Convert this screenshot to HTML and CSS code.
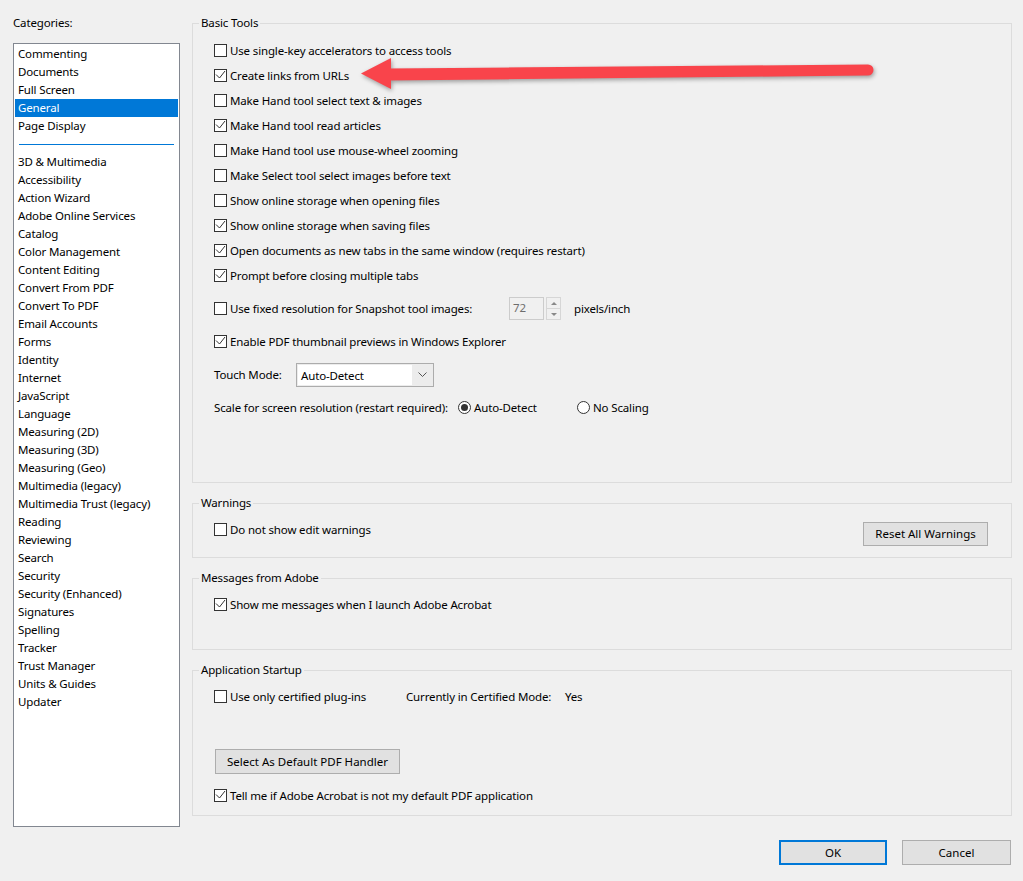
FILE: index.html
```html
<!doctype html>
<html lang="en">
<head>
<meta charset="utf-8">
<title>Preferences</title>
<link rel="stylesheet" href="styles.css">
</head>
<body>
<div class="dialog">
  <!-- category list on the left -->
  <div class="categories">
    <div class="cat-label">Categories:</div>
    <ul class="cat-list">
      <li>Commenting</li>
      <li>Documents</li>
      <li>Full Screen</li>
      <li class="selected">General</li>
      <li>Page Display</li>
      <li class="sep"></li>
      <li>3D &amp; Multimedia</li>
      <li>Accessibility</li>
      <li>Action Wizard</li>
      <li>Adobe Online Services</li>
      <li>Catalog</li>
      <li>Color Management</li>
      <li>Content Editing</li>
      <li>Convert From PDF</li>
      <li>Convert To PDF</li>
      <li>Email Accounts</li>
      <li>Forms</li>
      <li>Identity</li>
      <li>Internet</li>
      <li>JavaScript</li>
      <li>Language</li>
      <li>Measuring (2D)</li>
      <li>Measuring (3D)</li>
      <li>Measuring (Geo)</li>
      <li>Multimedia (legacy)</li>
      <li>Multimedia Trust (legacy)</li>
      <li>Reading</li>
      <li>Reviewing</li>
      <li>Search</li>
      <li>Security</li>
      <li>Security (Enhanced)</li>
      <li>Signatures</li>
      <li>Spelling</li>
      <li>Tracker</li>
      <li>Trust Manager</li>
      <li>Units &amp; Guides</li>
      <li>Updater</li>
    </ul>
  </div>

  <!-- settings for the selected category -->
  <div class="panel">
    <fieldset class="group basic">
      <legend>Basic Tools</legend>
      <div class="rows">
        <div class="row"><span class="check"><span class="box"></span>Use single-key accelerators to access tools</span></div>
        <div class="row"><span class="check"><span class="box"><svg viewBox="0 0 11 11"><path d="M1 4.5 L4.5 8 L10 1"/></svg></span>Create links from URLs</span></div>
        <div class="row"><span class="check"><span class="box"></span>Make Hand tool select text &amp; images</span></div>
        <div class="row"><span class="check"><span class="box"><svg viewBox="0 0 11 11"><path d="M1 4.5 L4.5 8 L10 1"/></svg></span>Make Hand tool read articles</span></div>
        <div class="row"><span class="check"><span class="box"></span>Make Hand tool use mouse-wheel zooming</span></div>
        <div class="row"><span class="check"><span class="box"></span>Make Select tool select images before text</span></div>
        <div class="row"><span class="check"><span class="box"></span>Show online storage when opening files</span></div>
        <div class="row"><span class="check"><span class="box"><svg viewBox="0 0 11 11"><path d="M1 4.5 L4.5 8 L10 1"/></svg></span>Show online storage when saving files</span></div>
        <div class="row"><span class="check"><span class="box"><svg viewBox="0 0 11 11"><path d="M1 4.5 L4.5 8 L10 1"/></svg></span>Open documents as new tabs in the same window (requires restart)</span></div>
        <div class="row"><span class="check"><span class="box"><svg viewBox="0 0 11 11"><path d="M1 4.5 L4.5 8 L10 1"/></svg></span>Prompt before closing multiple tabs</span></div>

        <div class="row tall first">
          <span class="check snap"><span class="box"></span>Use fixed resolution for Snapshot tool images:</span>
          <span class="spin">
            <span class="spin-field">72</span>
            <span class="spin-btns"><span class="up"></span><span class="down"></span></span>
          </span>
          <span class="unit">pixels/inch</span>
        </div>
        <div class="row tall"><span class="check"><span class="box"><svg viewBox="0 0 11 11"><path d="M1 4.5 L4.5 8 L10 1"/></svg></span>Enable PDF thumbnail previews in Windows Explorer</span></div>
        <div class="row tall">
          <span class="touch-label">Touch Mode:</span>
          <span class="combo">
            <span class="combo-text">Auto-Detect</span>
            <span class="combo-arrow"><svg viewBox="0 0 9 5"><path d="M0.5 0.5 L4.5 4.5 L8.5 0.5"/></svg></span>
          </span>
        </div>
        <div class="row tall">
          <span class="scale-label">Scale for screen resolution (restart required):</span>
          <span class="radio on auto"><span class="circle"></span>Auto-Detect</span>
          <span class="radio"><span class="circle"></span>No Scaling</span>
        </div>
      </div>
    </fieldset>

    <fieldset class="group warnings">
      <legend>Warnings</legend>
      <div class="rows split">
        <div class="row"><span class="check"><span class="box"></span>Do not show edit warnings</span></div>
        <button class="btn reset">Reset All Warnings</button>
      </div>
    </fieldset>

    <fieldset class="group messages">
      <legend>Messages from Adobe</legend>
      <div class="rows">
        <div class="row"><span class="check"><span class="box"><svg viewBox="0 0 11 11"><path d="M1 4.5 L4.5 8 L10 1"/></svg></span>Show me messages when I launch Adobe Acrobat</span></div>
      </div>
    </fieldset>

    <fieldset class="group startup">
      <legend>Application Startup</legend>
      <div class="rows">
        <div class="row">
          <span class="check plugins"><span class="box"></span>Use only certified plug-ins</span>
          <span class="mode-label">Currently in Certified Mode:</span>
          <span>Yes</span>
        </div>
        <button class="btn handler">Select As Default PDF Handler</button>
        <div class="row tell"><span class="check"><span class="box"><svg viewBox="0 0 11 11"><path d="M1 4.5 L4.5 8 L10 1"/></svg></span>Tell me if Adobe Acrobat is not my default PDF application</span></div>
      </div>
    </fieldset>

    <div class="actions">
      <button class="btn ok">OK</button>
      <button class="btn cancel">Cancel</button>
    </div>
  </div>

  <!-- red annotation arrow drawn over the dialog -->
  <svg class="annot-arrow" viewBox="0 0 1023 881" width="1023" height="881">
    <path d="M387 68.5 L868 64.5 A5.5 5.5 0 0 1 868 75.5 L387 80.5 Z"/>
    <path d="M361 73.5 L391 58 L391 89 Z"/>
  </svg>
</div>
</body>
</html>
```

FILE: styles.css
```css
html,body{margin:0;padding:0;background:#f0f0f0;color:#000;font-family:"Noto Sans",Arial,sans-serif;font-size:11.5px;letter-spacing:-0.15px;line-height:16px;}

.dialog{
  position:relative;
  width:1023px;
  height:881px;
  display:flex;
  gap:12px;
  padding:15px 0 0 13px;
  box-sizing:border-box;
}

/* Left column */
.categories{width:167px;flex:none;}
.cat-label{height:16px;}
.cat-list{
  list-style:none;
  margin:12px 0 0;
  padding:1px;
  height:784px;
  box-sizing:border-box;
  border:1px solid #828790;
  background:#fff;
}
.cat-list li{height:18px;line-height:18px;padding-left:3px;white-space:nowrap;}
.cat-list li.selected{background:#0078d7;color:#fff;}
/* separator between the two category blocks */
.cat-list li.sep{height:9px;padding:9px 4px 0;}
.cat-list li.sep::after{content:"";display:block;height:1px;background:#0078d7;}

/* Right column */
.panel{width:820px;flex:none;display:flex;flex-direction:column;}

.group{
  margin:0;
  padding:6px 0 0 6px;
  border:1px solid #dcdcdc;
  min-width:0;
}
.group + .group{margin-top:12px;}
.group legend{padding:0 2px;line-height:16px;}
.basic{padding-top:7px;padding-bottom:58px;}
.warnings{padding-bottom:11px;}
.messages{padding-bottom:32px;}
.startup{padding-bottom:7px;}

.rows{padding-left:15px;}
.row{height:25px;display:flex;align-items:center;white-space:nowrap;}
.row.tall{height:33px;}
.row.tall.first{margin-top:4px;}

/* Checkboxes and radios */
.check,.radio{display:inline-flex;align-items:center;}
.box,.circle{
  width:13px;
  height:13px;
  box-sizing:border-box;
  border:1px solid #333;
  background:#fff;
  margin-right:3px;
  flex:none;
}
.box svg{display:block;width:11px;height:11px;fill:none;stroke:#333;stroke-width:1;}
.circle{border-radius:50%;display:grid;place-items:center;}
.radio.on .circle::after{content:"";width:7px;height:7px;border-radius:50%;background:#333;}

/* Snapshot resolution */
.snap{width:295px;}
.spin{display:flex;gap:2px;}
.spin-field{
  width:35px;
  height:23px;
  box-sizing:border-box;
  border:1px solid #cccccc;
  background:#f0f0f0;
  color:#6d6d6d;
  padding:2px 0 0 3px;
}
.spin-btns{
  width:15px;
  height:23px;
  box-sizing:border-box;
  border:1px solid #d6d6d6;
  display:flex;
  flex-direction:column;
}
.spin-btns span{flex:1;display:grid;place-items:center;}
.spin-btns span::after{content:"";width:0;height:0;border-left:3px solid transparent;border-right:3px solid transparent;}
.spin-btns .up{border-bottom:1px solid #d6d6d6;}
.spin-btns .up::after{border-bottom:3px solid #888;}
.spin-btns .down::after{border-top:3px solid #888;}
.unit{margin-left:13px;}

/* Touch mode combo */
.touch-label{width:82px;}
.combo{
  width:138px;
  height:24px;
  box-sizing:border-box;
  border:1px solid #acacac;
  background:#ececec;
  padding:1px;
  display:flex;
}
.combo-text{flex:1;background:#fff;padding:3px 0 0 3px;}
.combo-arrow{width:20px;display:grid;place-items:center;}
.combo-arrow svg{width:9px;height:5px;fill:none;stroke:#555;stroke-width:1;}

.scale-label{width:244px;}
.radio.auto{width:119px;}

/* Buttons */
.btn{
  font:inherit;
  color:#000;
  background:#e1e1e1;
  border:1px solid #adadad;
  border-radius:0;
  padding:0;
  height:24px;
  box-sizing:border-box;
}
.split{display:flex;justify-content:space-between;align-items:flex-start;padding-right:23px;}
.reset{width:125px;margin-top:5px;}
.plugins{width:192px;}
.mode-label{width:159px;}
.handler{width:185px;height:25px;margin:40px 0 0 1px;display:block;}
.tell{margin-top:9px;}

.actions{display:flex;justify-content:flex-end;gap:15px;margin-top:24px;padding-right:1px;}
.ok{width:108px;height:25px;border:2px solid #0078d7;}
.cancel{width:109px;height:25px;}

/* Annotation overlay */
.annot-arrow{
  position:absolute;
  left:0;
  top:0;
  pointer-events:none;
  fill:#f9444b;
  filter:drop-shadow(1px 2px 2px rgba(0,0,0,0.35));
}
```
